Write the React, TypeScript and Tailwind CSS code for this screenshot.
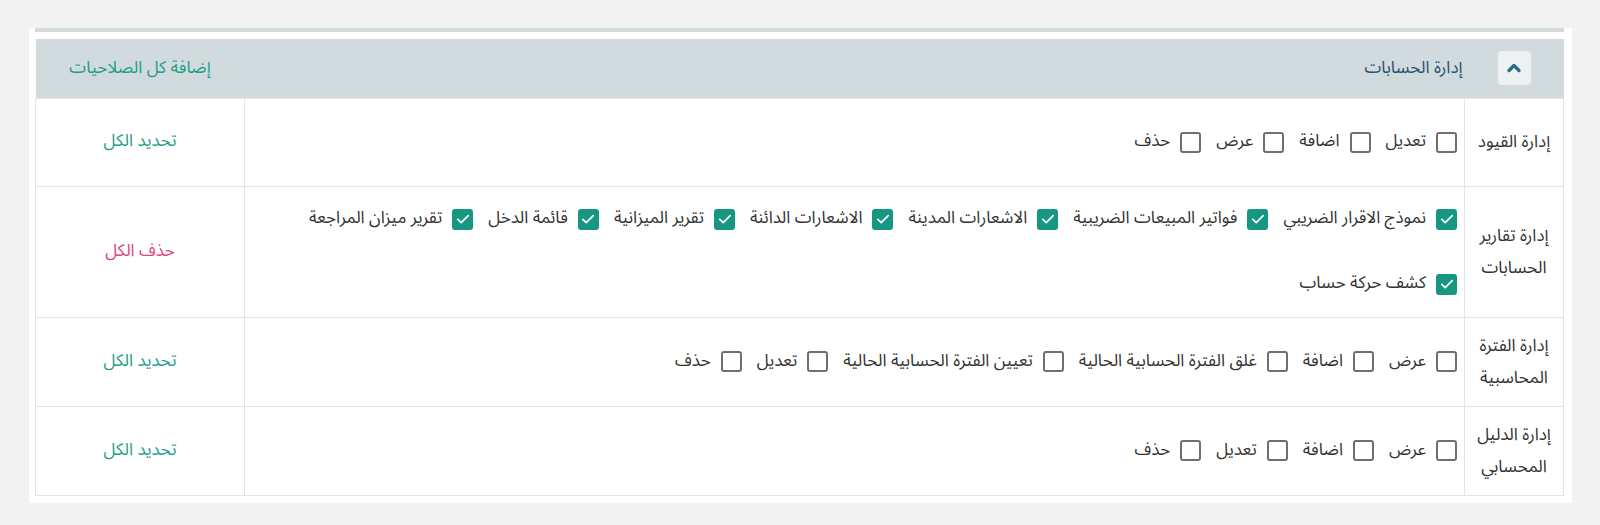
import { ChevronUp } from "lucide-react";

type PermissionRow = {
  label: string;
  lines: string[][];
  checked: boolean;
};

const rows: PermissionRow[] = [
  {
    label: "إدارة القيود",
    lines: [["تعديل", "اضافة", "عرض", "حذف"]],
    checked: false,
  },
  {
    label: "إدارة تقارير الحسابات",
    lines: [
      [
        "نموذج الاقرار الضريبي",
        "فواتير المبيعات الضريبية",
        "الاشعارات المدينة",
        "الاشعارات الدائنة",
        "تقرير الميزانية",
        "قائمة الدخل",
        "تقرير ميزان المراجعة",
      ],
      ["كشف حركة حساب"],
    ],
    checked: true,
  },
  {
    label: "إدارة الفترة المحاسبية",
    lines: [
      [
        "عرض",
        "اضافة",
        "غلق الفترة الحسابية الحالية",
        "تعيين الفترة الحسابية الحالية",
        "تعديل",
        "حذف",
      ],
    ],
    checked: false,
  },
  {
    label: "إدارة الدليل المحسابي",
    lines: [["عرض", "اضافة", "تعديل", "حذف"]],
    checked: false,
  },
];

function Checkbox({ checked }: { checked: boolean }) {
  if (checked) {
    return (
      <span className="flex h-[21px] w-[21px] shrink-0 items-center justify-center rounded-[3px] bg-[#179781]">
        <svg viewBox="0 0 16 16" className="h-[16px] w-[16px]" fill="none">
          <path
            d="M2.8 8.3l3.4 3.4L13.2 4.6"
            stroke="white"
            strokeWidth="1.7"
            strokeLinecap="round"
            strokeLinejoin="round"
          />
        </svg>
      </span>
    );
  }
  return (
    <span className="h-[21px] w-[21px] shrink-0 rounded-[3px] border-2 border-[#6f6f6f] bg-white" />
  );
}

function PermissionItem({ name, checked }: { name: string; checked: boolean }) {
  return (
    <label className="flex h-[65px] items-center gap-[10px] whitespace-nowrap">
      <Checkbox checked={checked} />
      <span>{name}</span>
    </label>
  );
}

export default function App() {
  return (
    <div
      dir="rtl"
      className="min-h-screen bg-[#f2f2f2] pr-[28px] pl-[29px] pt-[28px] text-[17px] text-[#333] [font-family:'Noto_Sans_Arabic','DejaVu_Sans',sans-serif]"
    >
      <div className="bg-white pr-[8px] pl-[6px] pb-[7px]">
        <div className="h-[4px] bg-[#d3dbdf]" />
        <table className="mt-[7px] w-full border-collapse">
          <colgroup>
            <col className="w-[99px]" />
            <col />
            <col className="w-[209px]" />
          </colgroup>
          <thead>
            <tr className="h-[59px] bg-[#d1dadd]">
              <th className="p-0">
                <span className="mx-auto flex h-[34px] w-[33px] items-center justify-center rounded-[4px] bg-[#eef1f3]">
                  <ChevronUp className="h-[20px] w-[20px] text-[#2b6e82]" strokeWidth={4} />
                </span>
              </th>
              <th className="px-[2px] text-right font-normal text-[#2c4f74]">
                إدارة الحسابات
              </th>
              <th className="text-center font-normal text-[#1e9e87]">
                إضافة كل الصلاحيات
              </th>
            </tr>
          </thead>
          <tbody>
            {rows.map((row) => (
              <tr key={row.label} className="h-[88px]">
                <td className="border border-[#e4e4e4] px-[8px] py-[12px] text-center leading-[32px]">
                  {row.label}
                </td>
                <td className="border border-[#e4e4e4] px-[7px] py-0">
                  {row.lines.map((line, index) => (
                    <div key={index} className="flex flex-nowrap gap-x-[15px]">
                      {line.map((name) => (
                        <PermissionItem key={name} name={name} checked={row.checked} />
                      ))}
                    </div>
                  ))}
                </td>
                <td
                  className={
                    "border border-[#e4e4e4] text-center " +
                    (row.checked ? "text-[#e0457b]" : "text-[#1e9e87]")
                  }
                >
                  {row.checked ? "حذف الكل" : "تحديد الكل"}
                </td>
              </tr>
            ))}
          </tbody>
        </table>
      </div>
    </div>
  );
}
